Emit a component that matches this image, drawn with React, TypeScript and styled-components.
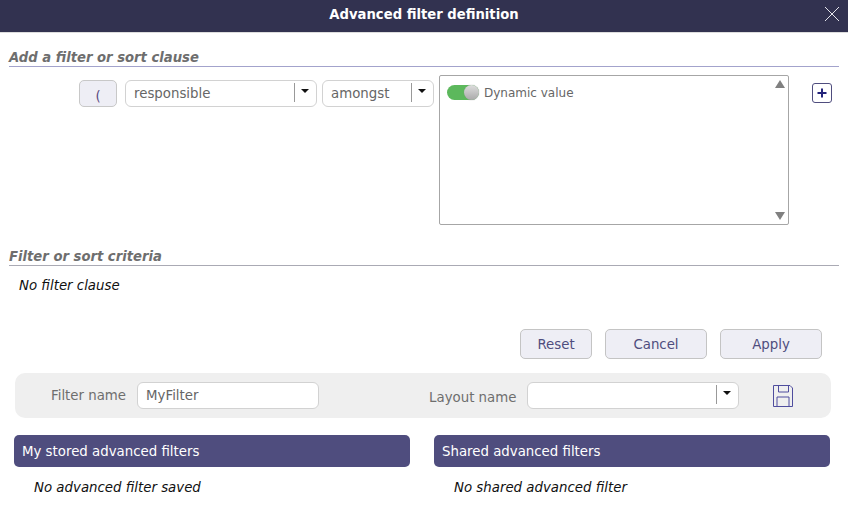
import React from "react";
import styled, { createGlobalStyle } from "styled-components";

const BASE = "13.33px";
const BOLD = "13.2px";

const Global = createGlobalStyle`
  html, body { margin: 0; padding: 0; background: #fff; }
  body { font-family: "DejaVu Sans", Verdana, sans-serif; font-size: ${BASE}; color: #666; }
`;
const Dialog = styled.div`
  width: 848px; height: 525px; overflow: hidden; background: #fff;
  display: flex; flex-direction: column;
`;
const TitleBar = styled.header`
  height: 32px; flex: none; background: #323250; border-bottom: 1px solid #ddd; box-sizing: content-box;
  display: flex; align-items: center; justify-content: center; position: relative;
  color: #fff; font-weight: 700; font-size: ${BOLD};
`;
const TitleText = styled.span`
  margin-top: -4px;
`;
const Close = styled.svg`
  position: absolute; right: 8px; top: 6px; width: 16px; height: 16px;
`;
const Section = styled.section`
  margin: 0 9px;
`;
const FirstSection = styled(Section)`
  padding-top: 16px;
`;
const SectionTitle = styled.h2<{ $line: string }>`
  margin: 0; height: 17px; line-height: 18px; font-size: ${BOLD}; font-weight: 700; font-style: italic;
  color: #6e6e6e; border-bottom: 1px solid ${p => p.$line};
  box-sizing: content-box;
`;
const ClauseRow = styled.div`
  display: flex; align-items: flex-start; height: 150px; margin-top: 8px;
`;
const ParenButton = styled.button`
  width: 38px; height: 27px; margin: 5px 8px 0 70px; padding: 5px 0 0;
  background: #eeeef5; border: 1px solid #c8c8c8; border-radius: 5px;
  font: ${BASE} "DejaVu Sans", sans-serif; color: #5a4a80;
`;
const Select = styled.div<{ $w: number }>`
  width: ${p => p.$w}px; height: 27px; box-sizing: border-box; flex: none;
  background: #fff; border: 1px solid #d2d2d2; border-radius: 6px;
  display: flex; align-items: flex-start; justify-content: space-between;
  padding-left: 8px; color: #666; font-size: ${BASE};
`;
const RowSelect = styled(Select)`
  margin: 5px 5px 0 0;
`;
const SelectValue = styled.span`
  line-height: 25px;
`;
const Arrow = styled.span`
  width: 22px; height: 19px; margin-top: 2px; border-left: 1px solid #999; box-sizing: border-box; flex: none;
  display: flex; justify-content: center; padding: 6px 1px 0 0;
  &::after {
    content: ""; width: 0; height: 0;
    border-left: 4px solid transparent; border-right: 4px solid transparent; border-top: 4px solid #111;
  }
`;
const ValueBox = styled.div`
  width: 350px; height: 150px; box-sizing: border-box; flex: none; position: relative;
  border: 1px solid #a6a6a6; border-radius: 2px; padding: 7px 7px;
  display: flex; align-items: flex-start; gap: 5px;
`;
const Toggle = styled.span`
  width: 32px; height: 15px; margin-top: 2px; border-radius: 8px; background: #5cb85c; position: relative; flex: none;
  &::after {
    content: ""; position: absolute; right: 0; top: 0; width: 15px; height: 15px; border-radius: 50%;
    background: linear-gradient(#ddd, #aaa); box-shadow: 0 0 1px #888;
  }
`;
const ToggleLabel = styled.span`
  line-height: 21px; font-size: 12px; color: #666;
`;
const ScrollUp = styled.span`
  position: absolute; right: 3px; top: 4px; width: 0; height: 0;
  border-left: 5px solid transparent; border-right: 5px solid transparent; border-bottom: 8px solid #808080;
`;
const ScrollDown = styled.span`
  position: absolute; right: 3px; bottom: 4px; width: 0; height: 0;
  border-left: 5px solid transparent; border-right: 5px solid transparent; border-top: 8px solid #808080;
`;
const PlusButton = styled.button`
  width: 20px; height: 20px; margin: 8px 0 0 23px; padding: 0; background: #fff;
  border: 1px solid #4f4d7e; border-radius: 3px; display: flex; align-items: center; justify-content: center;
`;
const CriteriaSection = styled(Section)`
  margin-top: 23px;
`;
const EmptyNote = styled.div<{ $x: number }>`
  padding-left: ${p => p.$x}px; font-style: italic; font-size: ${BASE}; color: #111; line-height: 16px;
`;
const CriteriaNote = styled(EmptyNote)`
  margin-top: 12px;
`;
const Actions = styled.div`
  display: flex; justify-content: flex-end; gap: 13px; margin: 35px 26px 0 0;
`;
const ActionButton = styled.button<{ $w: number }>`
  width: ${p => p.$w}px; height: 30px; padding: 0; background: #eeeef5;
  border: 1px solid #c4c4c4; border-radius: 5px; color: #4f4d7e;
  font: ${BASE} "DejaVu Sans", sans-serif;
`;
const SaveBand = styled.div`
  margin: 14px 17px 0 15px; height: 45px; background: #efefef; border-radius: 10px;
  display: flex; align-items: center; padding-left: 36px;
`;
const FieldLabel = styled.label`
  font-size: ${BASE}; color: #6e6e6e; margin-right: 11px;
`;
const TextInput = styled.input`
  width: 182px; height: 27px; box-sizing: border-box; background: #fff; border: 1px solid #d2d2d2; border-radius: 6px;
  padding: 0 8px; font: ${BASE} "DejaVu Sans", sans-serif; color: #666; outline: none; margin-right: 110px;
`;
const LayoutLabel = styled(FieldLabel)`
  margin-top: 3px;
`;
const SaveIcon = styled.svg`
  width: 22px; height: 24px; margin-left: 33px; flex: none;
`;
const Columns = styled.div`
  display: grid; grid-template-columns: 396px 396px; gap: 24px; margin: 17px 0 0 14px;
`;
const PanelHeader = styled.div`
  height: 32px; background: #4f4d7e; border-radius: 5px; color: #fff; font-size: ${BASE};
  display: flex; align-items: center; padding-left: 8px;
`;
const PanelNote = styled(EmptyNote)`
  margin-top: 13px;
`;

export default function App() {
  return (
    <Dialog>
      <Global />
      <TitleBar>
        <TitleText>Advanced filter definition</TitleText>
        <Close viewBox="0 0 16 16" fill="none" stroke="#e4e4ea" strokeWidth="1">
          <path d="M1 1L15 15M15 1L1 15" />
        </Close>
      </TitleBar>
      <FirstSection>
        <SectionTitle $line="#a3a3cc">Add a filter or sort clause</SectionTitle>
        <ClauseRow>
          <ParenButton>(</ParenButton>
          <RowSelect $w={192}><SelectValue>responsible</SelectValue><Arrow /></RowSelect>
          <RowSelect $w={112}><SelectValue>amongst</SelectValue><Arrow /></RowSelect>
          <ValueBox>
            <Toggle />
            <ToggleLabel>Dynamic value</ToggleLabel>
            <ScrollUp />
            <ScrollDown />
          </ValueBox>
          <PlusButton>
            <svg width="12" height="12" viewBox="0 0 12 12"><path d="M6 1.5V10.5M1.5 6H10.5" stroke="#23237a" strokeWidth="2" /></svg>
          </PlusButton>
        </ClauseRow>
      </FirstSection>
      <CriteriaSection>
        <SectionTitle $line="#aaaab4">Filter or sort criteria</SectionTitle>
        <CriteriaNote $x={10}>No filter clause</CriteriaNote>
      </CriteriaSection>
      <Actions>
        <ActionButton $w={72}>Reset</ActionButton>
        <ActionButton $w={102}>Cancel</ActionButton>
        <ActionButton $w={102}>Apply</ActionButton>
      </Actions>
      <SaveBand>
        <FieldLabel>Filter name</FieldLabel>
        <TextInput defaultValue="MyFilter" />
        <LayoutLabel>Layout name</LayoutLabel>
        <Select $w={212}><span /><Arrow /></Select>
        <SaveIcon viewBox="0 0 22 24" fill="none" stroke="#4f4d9e" strokeWidth="1">
          <path d="M1.5 1.5H18L20.5 4V22.5H1.5Z" />
          <path d="M6.5 1.5V8H16.5V1.5" />
          <path d="M5 22.5V13H17V22.5" />
        </SaveIcon>
      </SaveBand>
      <Columns>
        <div>
          <PanelHeader>My stored advanced filters</PanelHeader>
          <PanelNote $x={20}>No advanced filter saved</PanelNote>
        </div>
        <div>
          <PanelHeader>Shared advanced filters</PanelHeader>
          <PanelNote $x={20}>No shared advanced filter</PanelNote>
        </div>
      </Columns>
    </Dialog>
  );
}
